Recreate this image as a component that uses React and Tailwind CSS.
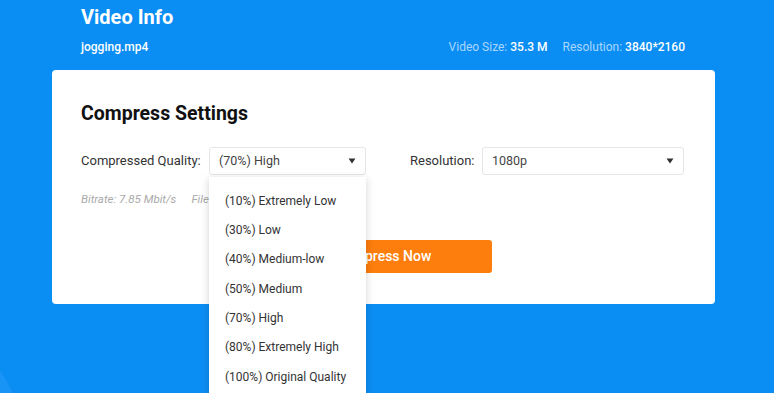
import React, { useState } from "react";

const qualities = [
  "(10%) Extremely Low",
  "(30%) Low",
  "(40%) Medium-low",
  "(50%) Medium",
  "(70%) High",
  "(80%) Extremely High",
  "(100%) Original Quality",
];

const Caret = () => (
  <svg width="8" height="6" viewBox="0 0 8 6" className="shrink-0">
    <path d="M0.5 0.5 L7.5 0.5 L4 5.5 Z" fill="#333" />
  </svg>
);

const Select = ({ value, onClick, className }) => (
  <div
    onClick={onClick}
    className={
      "flex items-center justify-between h-[28px] pl-[9px] pr-[9px] bg-white border border-[#e6e6e6] rounded-[3px] text-[12.5px] text-[#444] cursor-pointer " +
      className
    }
  >
    <span>{value}</span>
    <Caret />
  </div>
);

const App = () => {
  const [isOpen, setIsOpen] = useState(true);
  const [quality, setQuality] = useState("(70%) High");

  return (
    <div
      className="relative w-[774px] h-[393px] overflow-hidden bg-[#0b8ef4]"
      style={{ fontFamily: "Roboto, 'Liberation Sans', sans-serif" }}
    >
      {/* soft shape bottom left */}
      <div className="absolute left-[-330px] top-[290px] w-[360px] h-[360px] rounded-full bg-white/[0.05]" />

      <div className="relative pl-[52px] w-[715px]">
        <div className="px-[29px] pt-[4px]">
          <h1 className="text-[20px] leading-[26px] font-bold text-white">Video Info</h1>
          <div className="flex justify-between items-center mt-[9px] text-[12px] leading-[16px]">
            <span className="text-white font-medium">jogging.mp4</span>
            <div className="flex items-center mr-[1px]">
              <span className="text-[#a9d7ff]">Video Size:</span>
              <span className="text-white font-medium ml-[3px]">35.3 M</span>
              <span className="text-[#a9d7ff] ml-[15px]">Resolution:</span>
              <span className="text-white font-medium ml-[3px]">3840*2160</span>
            </div>
          </div>
        </div>

        <div className="mt-[15px] bg-white rounded-[4px] h-[234px] pl-[29px] pr-[31px] pt-[31px]">
          <h2 className="text-[19.5px] leading-[26px] font-bold text-[#111]">Compress Settings</h2>

          <div className="flex items-center mt-[20px]">
            <span className="text-[13px] text-[#333] w-[128px] whitespace-nowrap">Compressed Quality:</span>
            <div className="relative w-[157px]">
              <Select value={quality} onClick={() => setIsOpen(!isOpen)} className="w-full" />
              {isOpen && (
                <ul className="absolute z-10 left-0 top-[30px] w-full bg-white shadow-[0_2px_8px_rgba(0,0,0,0.18)] pt-[9px] pb-[8px]">
                  {qualities.map((q) => (
                    <li
                      key={q}
                      onClick={() => {
                        setQuality(q);
                        setIsOpen(false);
                      }}
                      className="h-[29.33px] flex items-center pl-[16px] text-[12px] text-[#333] whitespace-nowrap cursor-pointer hover:bg-gray-50"
                    >
                      {q}
                    </li>
                  ))}
                </ul>
              )}
            </div>
            <span className="text-[13px] text-[#333] ml-[44px] w-[72px] whitespace-nowrap">Resolution:</span>
            <Select value="1080p" className="w-[202px]" />
          </div>

          <div className="flex items-center mt-[16px] text-[11.5px] leading-[16px] italic text-[#aaa]">
            <span>Bitrate: 7.85 Mbit/s</span>
            <span className="ml-[15px]">File Size: 12.6 M</span>
          </div>

          <div className="flex justify-center mt-[33px] pl-[2px]">
            <button className="w-[217px] h-[33px] rounded-[3px] bg-[#fd7e0d] text-white text-[14px] font-medium">
              Compress Now
            </button>
          </div>
        </div>
      </div>
    </div>
  );
};

export default App;
